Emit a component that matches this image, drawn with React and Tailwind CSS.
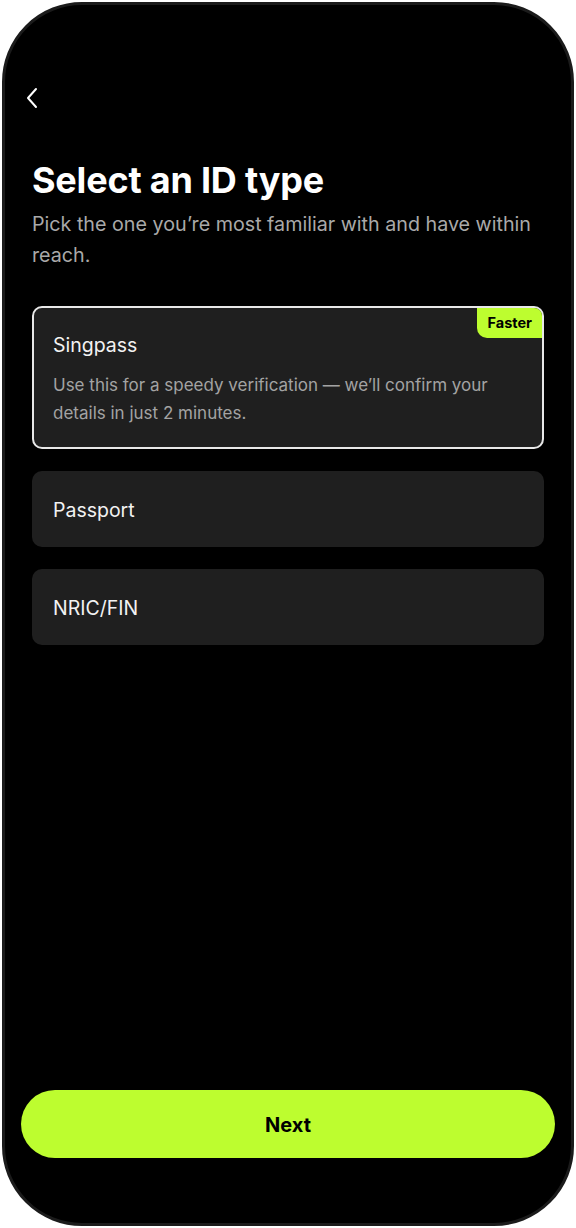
export default function App() {
  const font = { fontFamily: "Inter, 'Noto Sans', sans-serif" };
  return (
    <div className="w-[576px] h-[1228px] bg-white p-[2px]" style={font}>
      <div className="h-full rounded-[80px] bg-black border-[3px] border-[#1b1b1b] flex flex-col overflow-hidden">
        <div className="pt-[82px] pl-[20px]">
          <svg width="14" height="22" viewBox="0 0 14 22" fill="none">
            <path d="M11 2 L3 11 L11 20" stroke="#ffffff" strokeWidth="2" strokeLinecap="round" strokeLinejoin="round" />
          </svg>
        </div>
        <div className="px-[27px] mt-[50px]">
          <h1 className="text-[36px] leading-[42px] font-bold text-white tracking-[-0.2px]">Select an ID type</h1>
          <p className="mt-[8px] text-[19.7px] leading-[31px] text-[#a9a9a9]">
            Pick the one you’re most familiar with and have within reach.
          </p>
          <div className="mt-[35px] flex flex-col gap-[22px]">
            <div className="relative rounded-[10px] border-2 border-[#e8e8e8] bg-[#1f1f1f] pl-[19px] pr-[40px] pt-[24px] pb-[20px]">
              <div className="absolute top-0 right-0 bg-[#bdfd2f] rounded-tr-[8px] rounded-bl-[10px] px-[10px] h-[30px] flex items-center">
                <span className="text-[14.5px] font-bold text-black">Faster</span>
              </div>
              <div className="text-[19.5px] leading-[26px] text-[#f2f2f2]">Singpass</div>
              <div className="mt-[13px] text-[17px] leading-[28px] text-[#a3a3a3]">
                Use this for a speedy verification — we’ll confirm your details in just 2 minutes.
              </div>
            </div>
            <div className="h-[76px] rounded-[10px] bg-[#1f1f1f] pl-[21px] flex items-center">
              <span className="text-[19.5px] text-[#f2f2f2] pt-[3px]">Passport</span>
            </div>
            <div className="h-[76px] rounded-[10px] bg-[#1f1f1f] pl-[21px] flex items-center">
              <span className="text-[19.5px] text-[#f2f2f2] pt-[3px]">NRIC/FIN</span>
            </div>
          </div>
        </div>
        <div className="mt-auto px-[16px] pb-[65px]">
          <button className="w-full h-[68px] rounded-full bg-[#bdfd2f] text-[20px] font-bold text-black pt-[2px]">Next</button>
        </div>
      </div>
    </div>
  );
}
